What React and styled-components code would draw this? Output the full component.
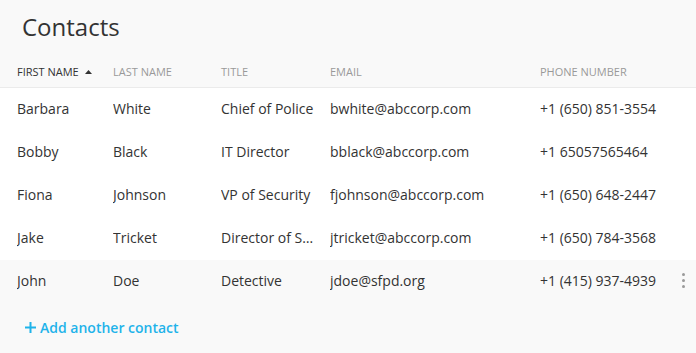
import React from "react";
import styled, { createGlobalStyle } from "styled-components";

const GlobalStyle = createGlobalStyle`
  html, body {
    margin: 0;
    padding: 0;
    background: #f9f9f9;
    font-family: "Open Sans", "Noto Sans", sans-serif;
    color: #333;
  }
`;

const Page = styled.div`
  width: 696px;
  height: 353px;
  background: #f9f9f9;
  overflow: hidden;
`;

const Title = styled.h1`
  margin: 0;
  padding: 10px 0 0 22px;
  height: 44px;
  box-sizing: border-box;
  font-size: 24px;
  font-weight: 400;
  line-height: 34px;
  color: #333;
`;

const Row = styled.div`
  display: grid;
  grid-template-columns: 96px 108px 109px 210px 1fr 24px;
  padding-left: 17px;
  padding-bottom: ${(p) => (p.$head ? "8px" : "3px")};
  align-items: ${(p) => (p.$head ? "end" : "center")};
  height: ${(p) => (p.$head ? "44px" : "43px")};
  box-sizing: border-box;
  background: ${(p) => (p.$head || p.$hover ? "#f9f9f9" : "#fff")};
  border-bottom: ${(p) => (p.$head ? "1px solid #ebebeb" : "none")};
`;

const HeadCell = styled.div`
  font-size: 11px;
  text-transform: uppercase;
  color: ${(p) => (p.$active ? "#333" : "#999")};
  white-space: nowrap;
  display: flex;
  align-items: center;
  gap: 6px;
`;

const Cell = styled.div`
  font-size: 14px;
  color: #333;
  white-space: nowrap;
  overflow: hidden;
  text-overflow: ellipsis;
  padding-right: 14px;
`;

const Kebab = styled.div`
  display: flex;
  flex-direction: column;
  align-items: center;
  gap: 3px;
  padding-right: 2px;

  span {
    width: 3px;
    height: 3px;
    border-radius: 50%;
    background: #9a9a9a;
  }
`;

const AddLink = styled.a`
  display: inline-flex;
  align-items: center;
  gap: 4px;
  margin: 15px 0 0 25px;
  font-size: 14px;
  font-weight: 600;
  color: #1fb3ea;
  text-decoration: none;
  cursor: pointer;
`;

const contacts = [
  ["Barbara", "White", "Chief of Police", "bwhite@abccorp.com", "+1 (650) 851-3554"],
  ["Bobby", "Black", "IT Director", "bblack@abccorp.com", "+1 65057565464"],
  ["Fiona", "Johnson", "VP of Security", "fjohnson@abccorp.com", "+1 (650) 648-2447"],
  ["Jake", "Tricket", "Director of Security", "jtricket@abccorp.com", "+1 (650) 784-3568"],
  ["John", "Doe", "Detective", "jdoe@sfpd.org", "+1 (415) 937-4939"],
];

const SortArrow = () => (
  <svg width="7" height="4" viewBox="0 0 7 4">
    <path d="M0 4 L3.5 0 L7 4 Z" fill="#333" />
  </svg>
);

export default function App() {
  return (
    <Page>
      <GlobalStyle />
      <Title>Contacts</Title>
      <Row $head>
        <HeadCell $active>
          First Name <SortArrow />
        </HeadCell>
        <HeadCell>Last Name</HeadCell>
        <HeadCell>Title</HeadCell>
        <HeadCell>Email</HeadCell>
        <HeadCell>Phone Number</HeadCell>
        <div />
      </Row>
      {contacts.map((c, i) => {
        const hover = i === contacts.length - 1;
        return (
          <Row key={c[3]} $hover={hover}>
            {c.map((v) => (
              <Cell key={v}>{v}</Cell>
            ))}
            {hover ? (
              <Kebab>
                <span />
                <span />
                <span />
              </Kebab>
            ) : (
              <div />
            )}
          </Row>
        );
      })}
      <AddLink>
        <svg width="11" height="11" viewBox="0 0 11 11">
          <path d="M5.5 0 V11 M0 5.5 H11" stroke="#1fb3ea" strokeWidth="2" />
        </svg>
        Add another contact
      </AddLink>
    </Page>
  );
}
